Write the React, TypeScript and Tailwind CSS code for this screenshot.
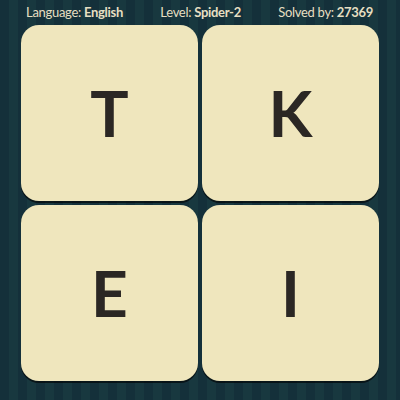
import React from 'react';

const letters = ['T', 'K', 'E', 'I'];

export default function App() {
    return (
        <div className="w-[400px] h-[400px] overflow-hidden bg-[repeating-linear-gradient(90deg,#14303a_0px,#14303a_9px,#18383f_9px,#18383f_18px)] font-['Lato','Liberation_Sans',sans-serif]">
            <div className="h-[25px] flex items-center justify-between pl-[26px] pr-[27px] text-[13px] tracking-[-0.3px] text-[#e6dfc2]">
                <span>Language: <b className="font-bold">English</b></span>
                <span>Level: <b className="font-bold">Spider-2</b></span>
                <span>Solved by: <b className="font-bold">27369</b></span>
            </div>
            <div className="ml-[21px] w-[358px] grid grid-cols-2 gap-[4px]">
                {letters.map((l) => (
                    <div
                        key={l}
                        className="h-[176px] rounded-[18px] bg-[#efe6bd] shadow-[0_2px_0_rgba(0,0,0,0.6)] flex items-center justify-center text-[64px] font-bold text-[#2b2724]"
                    >
                        {l}
                    </div>
                ))}
            </div>
        </div>
    );
}
